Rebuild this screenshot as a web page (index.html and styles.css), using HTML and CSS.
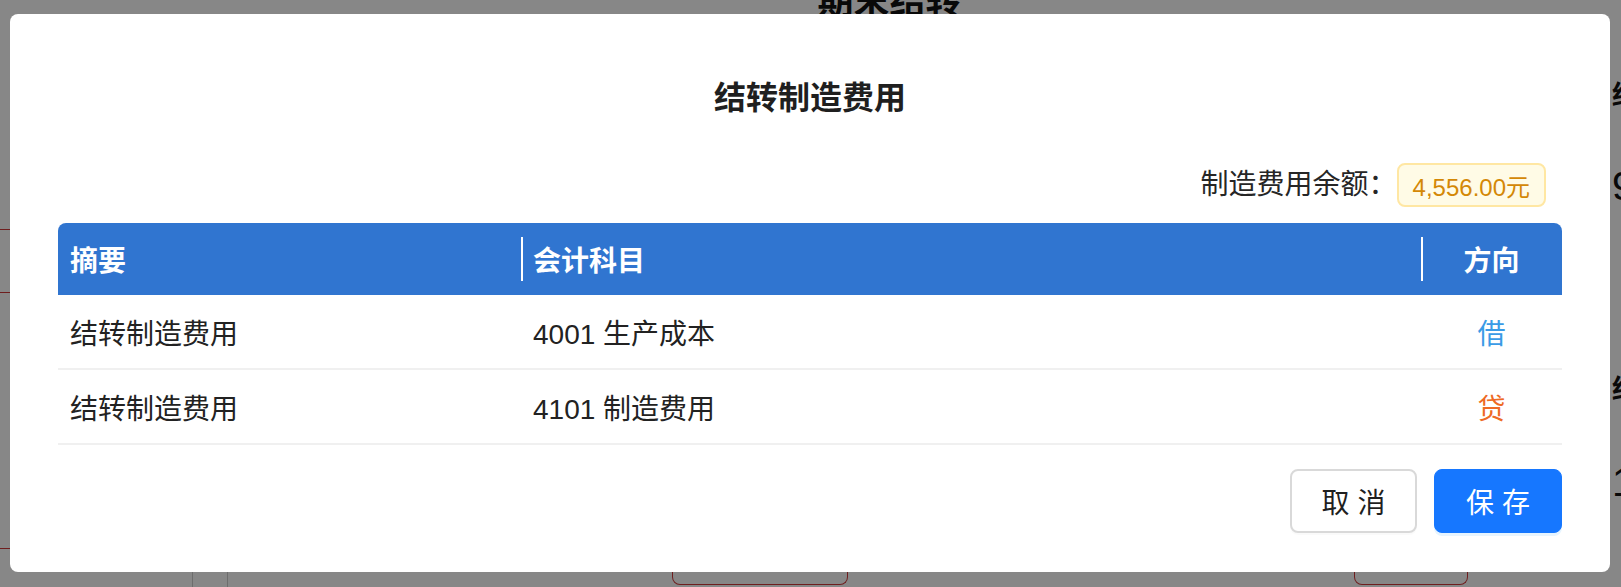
FILE: index.html
```html
<!DOCTYPE html>
<html lang="zh-CN">
<head>
<meta charset="utf-8">
<title>结转制造费用</title>
<link rel="stylesheet" href="styles.css">
</head>
<body>
<div class="page">
  <h1 class="page-title">期末结转</h1>
  <div class="page-body">
    <div class="side-left">
      <div class="line red l1"></div>
      <div class="line red l2"></div>
      <div class="line red l3"></div>
    </div>
    <div class="page-main">
      <div class="bottom-row">
        <div class="vline v1"></div>
        <div class="vline v2"></div>
        <div class="red-box rb1"></div>
        <div class="red-box rb2"></div>
      </div>
    </div>
    <div class="side-right">
      <span class="frag f1">结转</span>
      <span class="frag big f2">9</span>
      <span class="frag f3">结转</span>
      <span class="frag big f4">1</span>
    </div>
  </div>
</div>
<div class="mask"></div>
<div class="modal">
  <h2 class="modal-title">结转制造费用</h2>
  <div class="balance">
    <span class="balance-label">制造费用余额：</span>
    <span class="balance-value">4,556.00元</span>
  </div>
  <div class="table">
    <div class="thead">
      <div class="th">摘要</div>
      <div class="th sep">会计科目</div>
      <div class="th sep center">方向</div>
    </div>
    <div class="tr">
      <div class="td">结转制造费用</div>
      <div class="td">4001 生产成本</div>
      <div class="td center debit">借</div>
    </div>
    <div class="tr">
      <div class="td">结转制造费用</div>
      <div class="td">4101 制造费用</div>
      <div class="td center credit">贷</div>
    </div>
  </div>
  <div class="footer">
    <button class="btn btn-default">取 消</button>
    <button class="btn btn-primary">保 存</button>
  </div>
</div>
</body>
</html>
```
FILE: styles.css
```css
* { box-sizing: border-box; }
html, body { margin: 0; padding: 0; }
body {
  width: 1621px;
  height: 587px;
  overflow: hidden;
  background: #ffffff;
  font-family: "Liberation Sans", "Noto Sans CJK SC", sans-serif;
  color: #222;
}
/* underlying page (behind the mask) */
.page {
  height: 587px;
  display: flex;
  flex-direction: column;
  align-items: stretch;
}
.page-title {
  margin: -22px 0 0 158px;
  text-align: center;
  font-size: 36px;
  line-height: 48px;
  font-weight: 700;
  color: #111;
}
.page-body {
  flex: 1;
  display: flex;
}
.side-left {
  width: 10px;
  display: flex;
  flex-direction: column;
}
.line { height: 1px; }
.red { background: #d23a3a; }
.l1 { margin-top: 203px; }
.l2 { margin-top: 62px; }
.l3 { margin-top: 255px; }
.page-main {
  flex: 1;
  display: flex;
  flex-direction: column;
  justify-content: flex-end;
}
.bottom-row {
  height: 30px;
  display: flex;
  align-items: stretch;
}
.vline {
  width: 1px;
  background: #cfcfcf;
}
.v1 { margin-left: 182px; }
.v2 { margin-left: 34px; }
.red-box {
  border: 1px solid #d23a3a;
  border-top: none;
  border-radius: 0 0 8px 8px;
  margin-bottom: 2px;
}
.rb1 { margin-left: 444px; width: 176px; }
.rb2 { margin-left: 506px; width: 114px; }
.side-right {
  width: 9px;
  overflow: hidden;
  display: flex;
  flex-direction: column;
  white-space: nowrap;
}
.frag {
  font-size: 26px;
  line-height: 30px;
  font-weight: 700;
  color: #111;
}
.big { font-size: 40px; line-height: 40px; font-weight: 400; }
.f1 { margin-top: 54px; }
.f2 { margin-top: 56px; }
.f3 { margin-top: 168px; }
.f4 { margin-top: 58px; }

.mask {
  position: fixed;
  inset: 0;
  background: rgba(0, 0, 0, 0.47);
}
.modal {
  position: fixed;
  left: 10px;
  top: 14px;
  width: 1600px;
  height: 558px;
  background: #fff;
  border-radius: 8px;
  padding: 62px 48px 0;
  display: flex;
  flex-direction: column;
}
.modal-title {
  margin: 0;
  text-align: center;
  font-size: 32px;
  line-height: 44px;
  font-weight: 700;
  color: #1f1f1f;
}
.balance {
  margin-top: 43px;
  padding-right: 16px;
  display: flex;
  justify-content: flex-end;
  align-items: center;
}
.balance-label {
  font-size: 28px;
  line-height: 44px;
  color: #262626;
}
.balance-value {
  height: 44px;
  padding: 0 14px;
  display: flex;
  align-items: center;
  font-size: 24px;
  color: #d48806;
  background: #fffbe6;
  border: 2px solid #ffe7a3;
  border-radius: 8px;
}
.table {
  margin-top: 16px;
  font-size: 28px;
}
.thead, .tr {
  display: grid;
  grid-template-columns: 463px 900px 1fr;
}
.thead {
  height: 72px;
  background: #3075d0;
  color: #fff;
  font-weight: 700;
  border-radius: 8px 8px 0 0;
}
.th {
  position: relative;
  display: flex;
  align-items: center;
  padding: 0 12px;
}
.th.sep::before {
  content: "";
  position: absolute;
  left: 0;
  top: 14px;
  bottom: 14px;
  width: 2px;
  background: #fff;
}
.tr {
  height: 75px;
  border-bottom: 2px solid #f0f0f0;
}
.td {
  display: flex;
  align-items: center;
  padding: 0 12px;
  color: #222;
}
.center { justify-content: center; }
.debit { color: #3a9be6; }
.credit { color: #ee6a24; }
.footer {
  margin-top: 24px;
  display: flex;
  justify-content: flex-end;
  gap: 17px;
}
.btn {
  height: 64px;
  width: 127px;
  font-family: "Liberation Sans", "Noto Sans CJK SC", sans-serif;
  font-size: 28px;
  border-radius: 8px;
  cursor: pointer;
  padding: 0;
}
.btn-default {
  background: #fff;
  border: 2px solid #d9d9d9;
  color: #1f1f1f;
  box-shadow: 0 2px 0 rgba(0, 0, 0, 0.02);
}
.btn-primary {
  width: 128px;
  background: #1677ff;
  border: 1px solid #1677ff;
  color: #fff;
  box-shadow: 0 3px 0 rgba(5, 145, 255, 0.1);
}
```
